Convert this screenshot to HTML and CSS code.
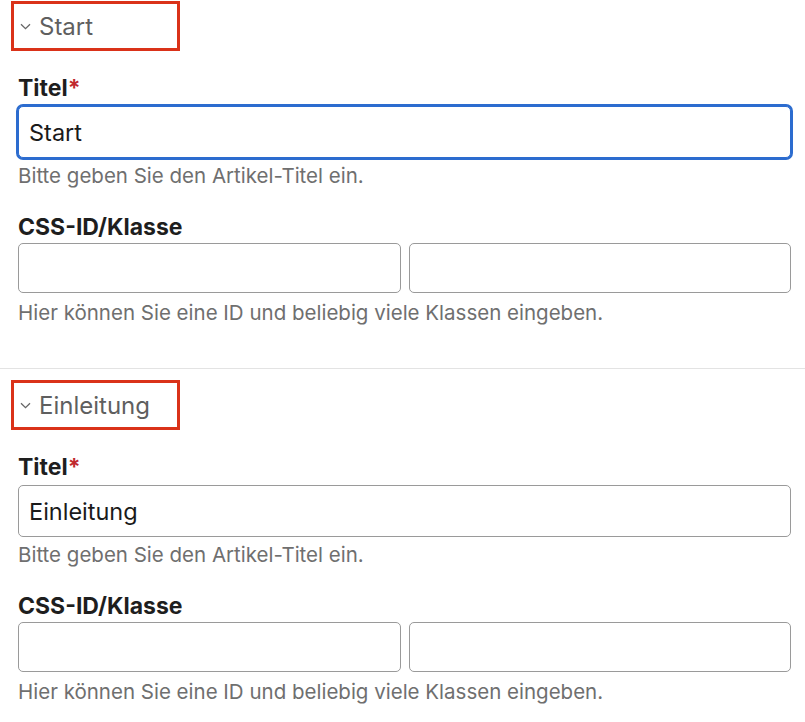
FILE: index.html
```html
<!DOCTYPE html>
<html lang="de">
<head>
    <meta charset="UTF-8">
    <meta name="viewport" content="width=device-width, initial-scale=1.0">
    <title>Artikel</title>
    <link rel="stylesheet" href="styles.css">
</head>
<body>
    <!-- Abschnitt: Start -->
    <div class="section section-first">
        <div class="legend">
            <svg class="chevron" width="11" height="7" viewBox="0 0 11 7"><path d="M1 1.2 L5.5 5.6 L10 1.2" fill="none" stroke="#666" stroke-width="1.3"/></svg>
            <span>Start</span>
        </div>
        <div class="field">
            <label for="title1">Titel<span class="req">*</span></label>
            <input type="text" id="title1" class="input input-lg is-focused" value="Start" autofocus>
            <p class="hint">Bitte geben Sie den Artikel-Titel ein.</p>
        </div>
        <div class="field field-pair">
            <label for="cssid1">CSS-ID/Klasse</label>
            <div class="pair">
                <input type="text" id="cssid1" class="input">
                <input type="text" class="input">
            </div>
            <p class="hint">Hier können Sie eine ID und beliebig viele Klassen eingeben.</p>
        </div>
    </div>

    <!-- Abschnitt: Einleitung -->
    <div class="section">
        <div class="legend">
            <svg class="chevron" width="11" height="7" viewBox="0 0 11 7"><path d="M1 1.2 L5.5 5.6 L10 1.2" fill="none" stroke="#666" stroke-width="1.3"/></svg>
            <span>Einleitung</span>
        </div>
        <div class="field">
            <label for="title2">Titel<span class="req">*</span></label>
            <input type="text" id="title2" class="input input-lg" value="Einleitung">
            <p class="hint">Bitte geben Sie den Artikel-Titel ein.</p>
        </div>
        <div class="field field-pair">
            <label for="cssid2">CSS-ID/Klasse</label>
            <div class="pair">
                <input type="text" id="cssid2" class="input">
                <input type="text" class="input">
            </div>
            <p class="hint">Hier können Sie eine ID und beliebig viele Klassen eingeben.</p>
        </div>
    </div>
</body>
</html>
```

FILE: styles.css
```css
body {
    font-family: Inter, "Liberation Sans", Arial, sans-serif;
    margin: 0;
    background: #fff;
    color: #1e1e1e;
}
.section {
    padding: 11px 14px 43px 18px;
}
.section-first {
    padding-top: 1px;
    border-bottom: 1px solid #e3e3e3;
}
.legend {
    display: flex;
    align-items: center;
    gap: 8px;
    box-sizing: border-box;
    width: 169px;
    height: 50px;
    margin-left: -7px;
    padding-left: 6px;
    border: 3px solid #da3219;
    color: #5f5f5f;
    font-size: 24px;
}
.field {
    margin-top: 25px;
}
.field + .field {
    margin-top: 27px;
}
.field label {
    display: block;
    font-size: 23px;
    font-weight: 700;
    line-height: 24px;
    margin-bottom: 6px;
}
.field-pair label {
    margin-bottom: 4px;
}
.req {
    color: #c0282d;
}
.input {
    display: block;
    width: 100%;
    box-sizing: border-box;
    height: 50px;
    padding: 0 10px;
    border: 1px solid #9a9a9a;
    border-radius: 5px;
    font-family: inherit;
    font-size: 23.5px;
    color: #1a1a1a;
    background: #fff;
    outline: none;
}
.input-lg {
    height: 52px;
}
.input.is-focused,
.input:focus {
    border-color: #2c6ccf;
    box-shadow: 0 0 0 2px #2c6ccf;
}
.pair {
    display: flex;
    gap: 8px;
}
.pair .input {
    flex: 1;
    width: auto;
    min-width: 0;
}
.hint {
    margin: 6px 0 0;
    font-size: 20.5px;
    line-height: 24px;
    color: #6f6f6f;
}
.field-pair .hint {
    margin-top: 8px;
}
```
